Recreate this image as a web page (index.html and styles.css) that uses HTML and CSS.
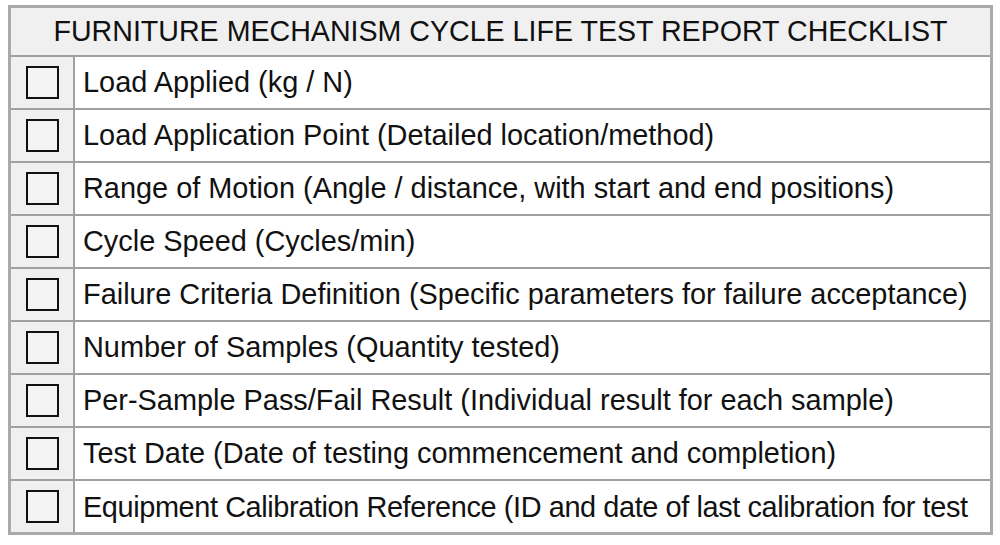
FILE: index.html
```html
<!DOCTYPE html>
<html>
<head>
<meta charset="utf-8">
<link rel="stylesheet" href="styles.css">
</head>
<body>
<div class="sheet">
  <div class="title">FURNITURE MECHANISM CYCLE LIFE TEST REPORT CHECKLIST</div>
  <div class="row"><div class="cell-box"><span class="box"></span></div><div class="cell-text">Load Applied (kg / N)</div></div>
  <div class="row"><div class="cell-box"><span class="box"></span></div><div class="cell-text">Load Application Point (Detailed location/method)</div></div>
  <div class="row"><div class="cell-box"><span class="box"></span></div><div class="cell-text">Range of Motion (Angle / distance, with start and end positions)</div></div>
  <div class="row"><div class="cell-box"><span class="box"></span></div><div class="cell-text">Cycle Speed (Cycles/min)</div></div>
  <div class="row"><div class="cell-box"><span class="box"></span></div><div class="cell-text">Failure Criteria Definition (Specific parameters for failure acceptance)</div></div>
  <div class="row"><div class="cell-box"><span class="box"></span></div><div class="cell-text">Number of Samples (Quantity tested)</div></div>
  <div class="row"><div class="cell-box"><span class="box"></span></div><div class="cell-text">Per-Sample Pass/Fail Result (Individual result for each sample)</div></div>
  <div class="row"><div class="cell-box"><span class="box"></span></div><div class="cell-text">Test Date (Date of testing commencement and completion)</div></div>
  <div class="row last"><div class="cell-box"><span class="box"></span></div><div class="cell-text tight">Equipment Calibration Reference (ID and date of last calibration for test</div></div>
</div>
</body>
</html>
```

FILE: styles.css
```css
html, body {
  margin: 0;
  padding: 0;
  background: #ffffff;
}
body {
  padding: 5px 0 0 8px;
  font-family: "Liberation Sans", Arial, sans-serif;
  color: #111111;
}
.sheet {
  width: 979px;
  border: 3px solid #a9a9a9;
  background: #ffffff;
}
.title {
  height: 47px;
  background: #f0f0f0;
  border-bottom: 2px solid #a0a0a0;
  display: flex;
  align-items: center;
  justify-content: center;
  font-size: 28.6px;
}
.row {
  display: flex;
  height: 51px;
  border-bottom: 2px solid #a0a0a0;
}
.row.last {
  border-bottom: none;
}
.cell-box {
  width: 62px;
  flex: none;
  background: #f0f0f0;
  border-right: 2px solid #a0a0a0;
  display: flex;
  align-items: center;
  justify-content: center;
}
.box {
  width: 29px;
  height: 29px;
  border: 2px solid #111111;
  background: #f4f4f4;
}
.cell-text {
  flex: 1;
  display: flex;
  align-items: center;
  padding-left: 8px;
  font-size: 28.9px;
  white-space: nowrap;
  overflow: hidden;
}
.cell-text.tight {
  letter-spacing: -0.4px;
  padding-top: 1px;
}
```
